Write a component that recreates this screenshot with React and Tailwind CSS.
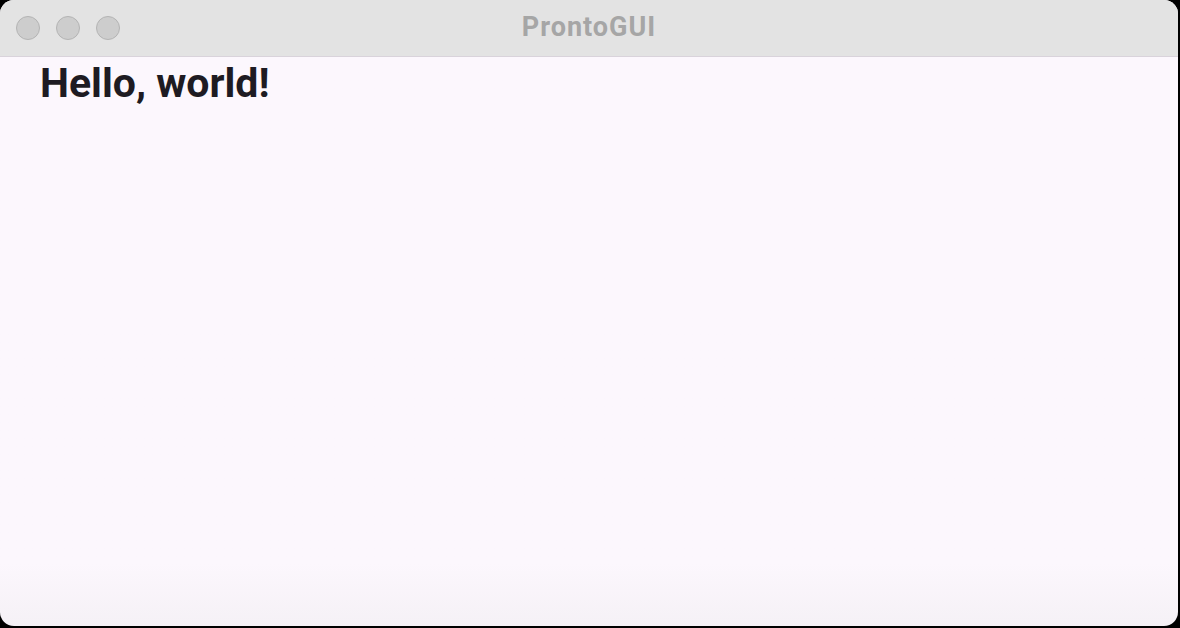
export default function App() {
  return (
    <div className="w-[1180px] h-[628px] bg-black overflow-hidden">
      <div className="w-[1178px] h-[626px] rounded-[14px] overflow-hidden flex flex-col bg-gradient-to-b from-[#fcf7fd] from-90% to-[#f5f1f6]">
        <div className="h-[57px] shrink-0 bg-[#e3e3e3] border-b border-[#d9d3db] relative flex items-center justify-center">
          <div className="absolute left-[16px] top-[16px] flex gap-[16px]">
            <div className="w-[24px] h-[24px] rounded-full bg-[#cdcdcd] border border-[#b4b4b4]" />
            <div className="w-[24px] h-[24px] rounded-full bg-[#cdcdcd] border border-[#b4b4b4]" />
            <div className="w-[24px] h-[24px] rounded-full bg-[#cdcdcd] border border-[#b4b4b4]" />
          </div>
          <span className="text-[27px] font-bold text-[#a6a6a6] leading-none tracking-[1px] mb-[2px]" style={{ fontFamily: "Roboto, sans-serif" }}>
            ProntoGUI
          </span>
        </div>
        <div className="flex-1 px-[40px] pt-[6px]">
          <h1 className="text-[41px] font-bold text-[#1e1b22] leading-none" style={{ fontFamily: "Roboto, sans-serif" }}>
            Hello, world!
          </h1>
        </div>
      </div>
    </div>
  );
}
